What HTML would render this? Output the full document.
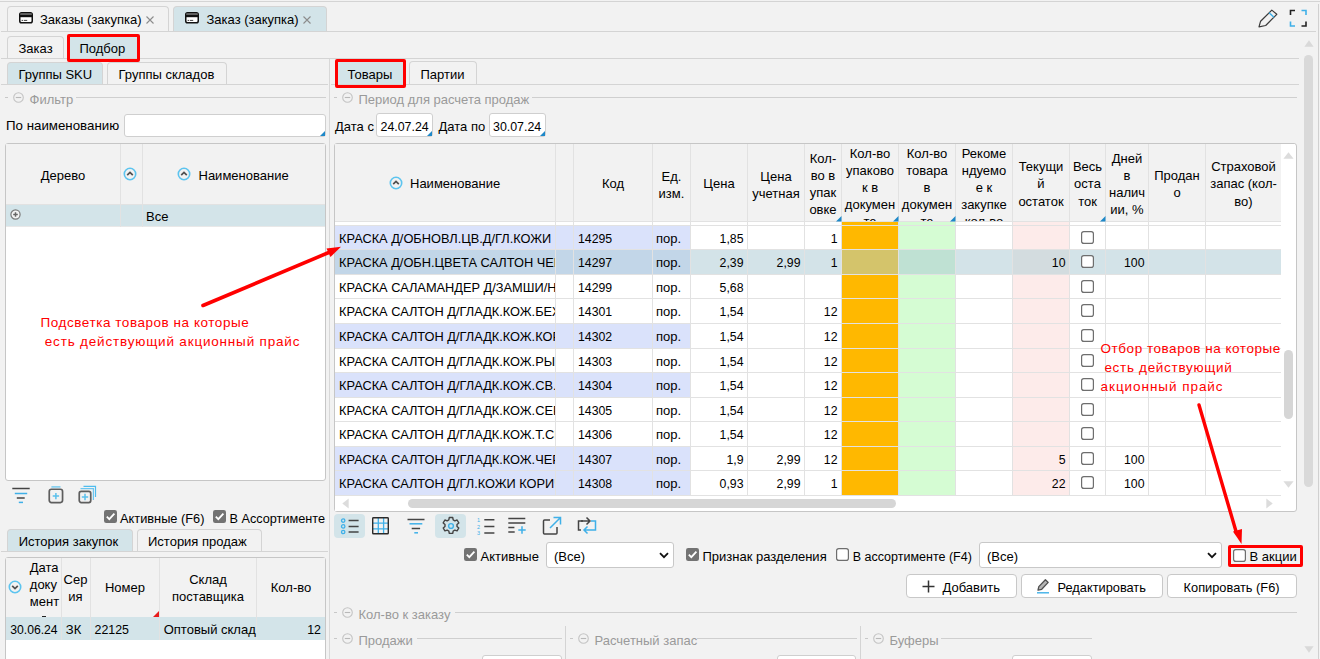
<!DOCTYPE html><html><head><meta charset="utf-8"><style>
html,body{margin:0;padding:0} body{width:1320px;height:659px;overflow:hidden;position:relative;background:#f2f2f2;font-family:"Liberation Sans", sans-serif;font-size:13px;color:#000}
.t{position:absolute;white-space:nowrap;line-height:16px}
svg{position:absolute;overflow:visible}
</style></head><body>
<div style="position:absolute;left:0px;top:1px;width:1320px;height:1px;background:#d4d4d4"></div>
<div style="position:absolute;left:1px;top:31px;width:1315px;height:1px;background:#d4d4d4"></div>
<div style="position:absolute;left:1318px;top:4px;width:1px;height:655px;background:#d0d0d0"></div>
<div style="position:absolute;left:7px;top:6px;width:162px;height:25px;background:#f2f2f2;border:1px solid #d4d4d4;border-bottom:none;border-radius:4px 4px 0 0;box-sizing:border-box"></div>
<div style="position:absolute;left:173px;top:6px;width:154px;height:25px;background:#d3e4e9;border:1px solid #d4d4d4;border-bottom:none;border-radius:4px 4px 0 0;box-sizing:border-box"></div>
<svg style="left:18.8px;top:12px" width="14" height="11.5" viewBox="0 0 14 11.5"><rect x="0.75" y="0.75" width="12.5" height="10" rx="1.8" fill="#fff" stroke="#111" stroke-width="1.5"/><rect x="1.2" y="1.2" width="11.6" height="1.6" fill="#555"/><rect x="1" y="2.8" width="12" height="2.4" fill="#111"/><rect x="2.6" y="7.9" width="1.6" height="1" fill="#444"/><rect x="5" y="7.9" width="3.2" height="1" fill="#444"/></svg>
<div class="t" style="left:40px;top:11.80px;font-size:13px;">Заказы (закупка)</div>
<svg style="left:184.8px;top:12.3px" width="14" height="11.5" viewBox="0 0 14 11.5"><rect x="0.75" y="0.75" width="12.5" height="10" rx="1.8" fill="#fff" stroke="#111" stroke-width="1.5"/><rect x="1.2" y="1.2" width="11.6" height="1.6" fill="#555"/><rect x="1" y="2.8" width="12" height="2.4" fill="#111"/><rect x="2.6" y="7.9" width="1.6" height="1" fill="#444"/><rect x="5" y="7.9" width="3.2" height="1" fill="#444"/></svg>
<div class="t" style="left:206.5px;top:11.80px;font-size:13px;">Заказ (закупка)</div>
<svg style="left:145.5px;top:15.5px" width="8" height="8" viewBox="0 0 8 8"><path d="M0.5 0.5L7.5 7.5M7.5 0.5L0.5 7.5" stroke="#8c8c8c" stroke-width="1.1"/></svg>
<svg style="left:302.5px;top:15.5px" width="8" height="8" viewBox="0 0 8 8"><path d="M0.5 0.5L7.5 7.5M7.5 0.5L0.5 7.5" stroke="#8c8c8c" stroke-width="1.1"/></svg>
<svg style="left:1258px;top:9px" width="20" height="19" viewBox="0 0 20 19"><path d="M13.8 1.1L18.8 5.3L7.7 16.5L1 17.8L2.6 12.2Z" fill="none" stroke="#3a3a3a" stroke-width="1.2" stroke-linejoin="round"/><path d="M11.1 3.7L15.9 8.3" stroke="#3fb0e8" stroke-width="1.4"/></svg>
<svg style="left:1289px;top:9px" width="19" height="19" viewBox="0 0 19 19"><path d="M1.5 6V1.5H6" fill="none" stroke="#222" stroke-width="1.6"/><path d="M12.5 1.5H17V6" fill="none" stroke="#3fb0e8" stroke-width="1.6"/><path d="M1.5 12.5V17H6" fill="none" stroke="#3fb0e8" stroke-width="1.6"/><path d="M12.5 17H17V12.5" fill="none" stroke="#222" stroke-width="1.6"/></svg>
<div style="position:absolute;left:1px;top:58px;width:1298px;height:1px;background:#d4d4d4"></div>
<div style="position:absolute;left:7px;top:36px;width:57px;height:22px;background:#f2f2f2;border:1px solid #d4d4d4;border-bottom:none;border-radius:4px 4px 0 0;box-sizing:border-box"></div>
<div style="position:absolute;left:68px;top:35px;width:71px;height:23px;background:#d3e4e9;border:1px solid #d4d4d4;border-bottom:none;border-radius:4px 4px 0 0;box-sizing:border-box"></div>
<div class="t" style="left:18.5px;top:40.50px;font-size:13px;">Заказ</div>
<div class="t" style="left:79.5px;top:40.50px;font-size:13px;">Подбор</div>
<svg style="left:1304px;top:40px" width="10" height="7" viewBox="0 0 10 7"><path d="M5 0.3L9.6 6.7H0.4Z" fill="#d9d9d9"/></svg>
<div style="position:absolute;left:1304px;top:55px;width:9px;height:432px;background:#d9d9d9;border-radius:5px"></div>
<svg style="left:1304px;top:646px" width="10" height="7" viewBox="0 0 10 7"><path d="M5 6.7L9.6 0.3H0.4Z" fill="#d9d9d9"/></svg>
<div style="position:absolute;left:329px;top:59px;width:1px;height:600px;background:#d8d8d8"></div>
<div style="position:absolute;left:1px;top:84px;width:327px;height:1px;background:#d4d4d4"></div>
<div style="position:absolute;left:7px;top:62px;width:96px;height:22px;background:#d3e4e9;border:1px solid #d4d4d4;border-bottom:none;border-radius:4px 4px 0 0;box-sizing:border-box"></div>
<div style="position:absolute;left:107px;top:62px;width:120px;height:22px;background:#f2f2f2;border:1px solid #d4d4d4;border-bottom:none;border-radius:4px 4px 0 0;box-sizing:border-box"></div>
<div class="t" style="left:18.5px;top:66.50px;font-size:13px;">Группы SKU</div>
<div class="t" style="left:118.5px;top:66.50px;font-size:13px;">Группы складов</div>
<div style="position:absolute;left:5px;top:97px;width:3px;height:1px;background:#c8c8c8"></div>
<svg style="left:13px;top:91.5px" width="11" height="11" viewBox="0 0 11 11"><circle cx="5.5" cy="5.5" r="4.8" fill="none" stroke="#c4c4c4" stroke-width="1.1"/><path d="M2.8 5.5H8.2" stroke="#b8b8b8" stroke-width="1.1"/></svg>
<div class="t" style="left:29.5px;top:91.50px;font-size:13px;color:#9a9a9a">Фильтр</div>
<div style="position:absolute;left:76px;top:97px;width:250px;height:1px;background:#cfcfcf"></div>
<div class="t" style="left:6px;top:118.39px;font-size:13.3px;">По наименованию</div>
<div style="position:absolute;left:124px;top:114px;width:202px;height:23px;background:#fff;border:1px solid #cfcfcf;border-radius:3px;box-sizing:border-box"></div>
<svg style="left:320px;top:131px" width="5" height="5" viewBox="0 0 5 5"><path d="M5 0V5H0Z" fill="#1e88c8"/></svg>
<div style="position:absolute;left:5px;top:143px;width:321px;height:338px;background:#fff;border:1px solid #c6c6c6;border-radius:3px;box-sizing:border-box"></div>
<div style="position:absolute;left:6px;top:144px;width:319px;height:60px;background:#f2f2f2"></div>
<div style="position:absolute;left:6px;top:204px;width:319px;height:1px;background:#e2e2e2"></div>
<div style="position:absolute;left:6px;top:205px;width:319px;height:21px;background:#d3e4e9"></div>
<div style="position:absolute;left:6px;top:226px;width:319px;height:1px;background:#e8e8e8"></div>
<div style="position:absolute;left:120px;top:144px;width:1px;height:83px;background:#e2e2e2"></div>
<div style="position:absolute;left:142px;top:144px;width:1px;height:83px;background:#e2e2e2"></div>
<div class="t" style="left:40.8px;top:167.50px;font-size:13px;">Дерево</div>
<svg style="left:123px;top:166.8px" width="14" height="14" viewBox="0 0 14 14"><circle cx="7" cy="7" r="5.7" fill="#f2f2f2" stroke="#5cc4ef" stroke-width="1.6"/><path d="M4.2 8.2L7 5.4L9.8 8.2" fill="none" stroke="#505050" stroke-width="1.7"/></svg>
<svg style="left:177.4px;top:166.8px" width="14" height="14" viewBox="0 0 14 14"><circle cx="7" cy="7" r="5.7" fill="#f2f2f2" stroke="#5cc4ef" stroke-width="1.6"/><path d="M4.2 8.2L7 5.4L9.8 8.2" fill="none" stroke="#505050" stroke-width="1.7"/></svg>
<div class="t" style="left:198.5px;top:167.50px;font-size:13px;">Наименование</div>
<svg style="left:10px;top:209px" width="11" height="11" viewBox="0 0 11 11"><circle cx="5.5" cy="5.5" r="4.6" fill="#f4f4f4" stroke="#7a7a7a" stroke-width="1.2"/><path d="M3.2 5.5H7.8M5.5 3.2V7.8" stroke="#666" stroke-width="1.5"/></svg>
<div class="t" style="left:146px;top:208.50px;font-size:13px;">Все</div>
<svg style="left:12px;top:487px" width="18" height="17" viewBox="0 0 18 17"><path d="M0.3 1.5H17.7" stroke="#444" stroke-width="1.5"/><path d="M2.8 6.5H15.2" stroke="#3fb0e8" stroke-width="1.5"/><path d="M4.8 11H12.7" stroke="#444" stroke-width="1.5"/><path d="M6.8 15.4H11" stroke="#3fb0e8" stroke-width="1.5"/></svg>
<svg style="left:47px;top:486px" width="18" height="19" viewBox="0 0 18 19"><path d="M4.4 0.9H13.5" stroke="#7fcdef" stroke-width="1.6"/><rect x="2.25" y="3.25" width="13.3" height="13.3" rx="2.2" fill="none" stroke="#5e5e5e" stroke-width="1.7"/><path d="M8.9 6.9V13.3M5.7 10.1H12.1" stroke="#5bc0eb" stroke-width="1.5"/></svg>
<svg style="left:77px;top:485px" width="20" height="20" viewBox="0 0 20 20"><path d="M6.5 1.3H18.5V12" fill="none" stroke="#4fbdee" stroke-width="1.2"/><path d="M3.5 3.6H16.4V15" fill="none" stroke="#6cc6ef" stroke-width="1.2"/><rect x="2.25" y="6.45" width="11.5" height="11.1" rx="2" fill="#f2f2f2" stroke="#5e5e5e" stroke-width="1.7"/><path d="M8 8.8V15.2M4.8 12H11.2" stroke="#5bc0eb" stroke-width="1.5"/></svg>
<svg style="left:104px;top:510px" width="13" height="13" viewBox="0 0 13 13"><rect x="0" y="0" width="13" height="13" rx="2.2" fill="#737373"/><path d="M2.8 6.7L5.3 9.2L10.4 3.6" fill="none" stroke="#fff" stroke-width="1.8"/></svg>
<div class="t" style="left:120px;top:510.56px;font-size:12.8px;">Активные (F6)</div>
<svg style="left:213px;top:510px" width="13" height="13" viewBox="0 0 13 13"><rect x="0" y="0" width="13" height="13" rx="2.2" fill="#737373"/><path d="M2.8 6.7L5.3 9.2L10.4 3.6" fill="none" stroke="#fff" stroke-width="1.8"/></svg>
<div class="t" style="left:229.5px;top:510.60px;font-size:12.7px;">В Ассортименте</div>
<div style="position:absolute;left:1px;top:551px;width:327px;height:1px;background:#d4d4d4"></div>
<div style="position:absolute;left:7px;top:529px;width:126px;height:22px;background:#d3e4e9;border:1px solid #d4d4d4;border-bottom:none;border-radius:4px 4px 0 0;box-sizing:border-box"></div>
<div style="position:absolute;left:137px;top:529px;width:125px;height:22px;background:#f2f2f2;border:1px solid #d4d4d4;border-bottom:none;border-radius:4px 4px 0 0;box-sizing:border-box"></div>
<div class="t" style="left:18.7px;top:533.50px;font-size:13px;">История закупок</div>
<div class="t" style="left:148px;top:533.50px;font-size:13px;">История продаж</div>
<div style="position:absolute;left:5px;top:557px;width:321px;height:110px;background:#fff;border:1px solid #c6c6c6;border-radius:3px;box-sizing:border-box"></div>
<div style="position:absolute;left:6px;top:558px;width:319px;height:59px;background:#f2f2f2"></div>
<div style="position:absolute;left:6px;top:617px;width:319px;height:23px;background:#d3e4e9"></div>
<div style="position:absolute;left:61px;top:558px;width:1px;height:82px;background:#e2e2e2"></div>
<div style="position:absolute;left:90px;top:558px;width:1px;height:82px;background:#e2e2e2"></div>
<div style="position:absolute;left:159px;top:558px;width:1px;height:82px;background:#e2e2e2"></div>
<div style="position:absolute;left:256px;top:558px;width:1px;height:82px;background:#e2e2e2"></div>
<svg style="left:8.2px;top:580.2px" width="14" height="14" viewBox="0 0 14 14"><circle cx="7" cy="7" r="5.7" fill="#f2f2f2" stroke="#5cc4ef" stroke-width="1.6"/><path d="M4.2 5.8L7 8.6L9.8 5.8" fill="none" stroke="#505050" stroke-width="1.7"/></svg>
<div style="position:absolute;left:0;top:0;width:400px;height:617px;overflow:hidden">
<div style="position:absolute;left:42.3px;top:615.6px;width:3.6px;height:1.3px;background:#222"></div>
<div class="t" style="left:29.8px;top:559.80px;font-size:13px;">Дата</div>
<div class="t" style="left:29.8px;top:577.10px;font-size:13px;">доку</div>
<div class="t" style="left:29.8px;top:594.40px;font-size:13px;">мент</div>
</div>
<div class="t" style="left:-74.5px;top:572.00px;width:300px;text-align:center;font-size:13px;">Сер</div>
<div class="t" style="left:-74.5px;top:589.00px;width:300px;text-align:center;font-size:13px;">ия</div>
<div class="t" style="left:-25.0px;top:580.30px;width:300px;text-align:center;font-size:13px;">Номер</div>
<svg style="left:153px;top:611px" width="6" height="6" viewBox="0 0 6 6"><path d="M6 0V6H0Z" fill="#e81c1c"/></svg>
<div class="t" style="left:58.0px;top:571.50px;width:300px;text-align:center;font-size:13px;">Склад</div>
<div class="t" style="left:58.0px;top:588.50px;width:300px;text-align:center;font-size:13px;">поставщика</div>
<div class="t" style="left:141.0px;top:580.30px;width:300px;text-align:center;font-size:13px;">Кол-во</div>
<div class="t" style="left:10.2px;top:621.77px;font-size:12.2px;">30.06.24</div>
<div class="t" style="left:65.8px;top:621.50px;font-size:13px;">ЗК</div>
<div class="t" style="left:94.5px;top:621.70px;font-size:12.4px;">22125</div>
<div class="t" style="left:163.7px;top:621.50px;font-size:13px;">Оптовый склад</div>
<div class="t" style="left:21px;top:621.70px;width:300px;text-align:right;font-size:12.4px;">12</div>
<div style="position:absolute;left:331px;top:84px;width:968px;height:1px;background:#d4d4d4"></div>
<div style="position:absolute;left:335px;top:61px;width:70px;height:23px;background:#d3e4e9;border:1px solid #d4d4d4;border-bottom:none;border-radius:4px 4px 0 0;box-sizing:border-box"></div>
<div style="position:absolute;left:409px;top:61px;width:68px;height:23px;background:#f2f2f2;border:1px solid #d4d4d4;border-bottom:none;border-radius:4px 4px 0 0;box-sizing:border-box"></div>
<div class="t" style="left:347.5px;top:67.00px;font-size:13px;">Товары</div>
<div class="t" style="left:420.5px;top:67.00px;font-size:13px;">Партии</div>
<div style="position:absolute;left:334px;top:97px;width:3px;height:1px;background:#c8c8c8"></div>
<svg style="left:342px;top:91.5px" width="11" height="11" viewBox="0 0 11 11"><circle cx="5.5" cy="5.5" r="4.8" fill="none" stroke="#c4c4c4" stroke-width="1.1"/><path d="M2.8 5.5H8.2" stroke="#b8b8b8" stroke-width="1.1"/></svg>
<div class="t" style="left:358.5px;top:91.50px;font-size:13px;color:#9a9a9a">Период для расчета продаж</div>
<div style="position:absolute;left:532px;top:97px;width:765px;height:1px;background:#cfcfcf"></div>
<div class="t" style="left:335px;top:118.50px;font-size:13px;">Дата с</div>
<div style="position:absolute;left:376px;top:113px;width:57px;height:24px;background:#fff;border:1px solid #cfcfcf;border-radius:3px;box-sizing:border-box"></div>
<svg style="left:427px;top:131px" width="5" height="5" viewBox="0 0 5 5"><path d="M5 0V5H0Z" fill="#1e88c8"/></svg>
<div class="t" style="left:380.5px;top:118.70px;font-size:12.4px;">24.07.24</div>
<div class="t" style="left:438.5px;top:118.50px;font-size:13px;">Дата по</div>
<div style="position:absolute;left:489px;top:113px;width:57px;height:24px;background:#fff;border:1px solid #cfcfcf;border-radius:3px;box-sizing:border-box"></div>
<svg style="left:540px;top:131px" width="5" height="5" viewBox="0 0 5 5"><path d="M5 0V5H0Z" fill="#1e88c8"/></svg>
<div class="t" style="left:493px;top:118.70px;font-size:12.4px;">30.07.24</div>
<div style="position:absolute;left:334px;top:143px;width:963px;height:369px;background:#fff;border:1px solid #c6c6c6;border-radius:3px;box-sizing:border-box"></div>
<div style="position:absolute;left:335px;top:144px;width:946px;height:352px;background:#e2e2e2"></div>
<div style="position:absolute;left:335px;top:222px;width:220px;height:3px;background:#fff"></div>
<div style="position:absolute;left:556px;top:222px;width:17px;height:3px;background:#fff"></div>
<div style="position:absolute;left:574px;top:222px;width:78px;height:3px;background:#fff"></div>
<div style="position:absolute;left:653px;top:222px;width:37px;height:3px;background:#fff"></div>
<div style="position:absolute;left:691px;top:222px;width:56px;height:3px;background:#fff"></div>
<div style="position:absolute;left:748px;top:222px;width:56px;height:3px;background:#fff"></div>
<div style="position:absolute;left:805px;top:222px;width:36px;height:3px;background:#fff"></div>
<div style="position:absolute;left:842px;top:222px;width:56px;height:3px;background:#ffb800"></div>
<div style="position:absolute;left:899px;top:222px;width:56px;height:3px;background:#d5fcd3"></div>
<div style="position:absolute;left:956px;top:222px;width:56px;height:3px;background:#fff"></div>
<div style="position:absolute;left:1013px;top:222px;width:56px;height:3px;background:#fdebea"></div>
<div style="position:absolute;left:1070px;top:222px;width:35px;height:3px;background:#fff"></div>
<div style="position:absolute;left:1106px;top:222px;width:42px;height:3px;background:#fff"></div>
<div style="position:absolute;left:1149px;top:222px;width:56px;height:3px;background:#fff"></div>
<div style="position:absolute;left:1206px;top:222px;width:75px;height:3px;background:#fff"></div>
<div style="position:absolute;left:335px;top:226px;width:220px;height:23px;background:#dae2fb"></div>
<div style="position:absolute;left:556px;top:226px;width:17px;height:23px;background:#dae2fb"></div>
<div style="position:absolute;left:574px;top:226px;width:78px;height:23px;background:#dae2fb"></div>
<div style="position:absolute;left:653px;top:226px;width:37px;height:23px;background:#dae2fb"></div>
<div style="position:absolute;left:691px;top:226px;width:56px;height:23px;background:#fff"></div>
<div style="position:absolute;left:748px;top:226px;width:56px;height:23px;background:#fff"></div>
<div style="position:absolute;left:805px;top:226px;width:36px;height:23px;background:#fff"></div>
<div style="position:absolute;left:842px;top:226px;width:56px;height:23px;background:#ffb800"></div>
<div style="position:absolute;left:899px;top:226px;width:56px;height:23px;background:#d5fcd3"></div>
<div style="position:absolute;left:956px;top:226px;width:56px;height:23px;background:#fff"></div>
<div style="position:absolute;left:1013px;top:226px;width:56px;height:23px;background:#fdebea"></div>
<div style="position:absolute;left:1070px;top:226px;width:35px;height:23px;background:#fff"></div>
<div style="position:absolute;left:1106px;top:226px;width:42px;height:23px;background:#fff"></div>
<div style="position:absolute;left:1149px;top:226px;width:56px;height:23px;background:#fff"></div>
<div style="position:absolute;left:1206px;top:226px;width:75px;height:23px;background:#fff"></div>
<div style="position:absolute;left:335px;top:250px;width:220px;height:24px;background:#c2d6e8"></div>
<div style="position:absolute;left:556px;top:250px;width:17px;height:24px;background:#c2d6e8"></div>
<div style="position:absolute;left:574px;top:250px;width:78px;height:24px;background:#c2d6e8"></div>
<div style="position:absolute;left:653px;top:250px;width:37px;height:24px;background:#c2d6e8"></div>
<div style="position:absolute;left:691px;top:250px;width:56px;height:24px;background:#d3e3e8"></div>
<div style="position:absolute;left:748px;top:250px;width:56px;height:24px;background:#d3e3e8"></div>
<div style="position:absolute;left:805px;top:250px;width:36px;height:24px;background:#d3e3e8"></div>
<div style="position:absolute;left:842px;top:250px;width:56px;height:24px;background:#d4c46b"></div>
<div style="position:absolute;left:899px;top:250px;width:56px;height:24px;background:#bfe1d3"></div>
<div style="position:absolute;left:956px;top:250px;width:56px;height:24px;background:#d3e3e8"></div>
<div style="position:absolute;left:1013px;top:250px;width:56px;height:24px;background:#d3dcdf"></div>
<div style="position:absolute;left:1070px;top:250px;width:35px;height:24px;background:#d3e3e8"></div>
<div style="position:absolute;left:1106px;top:250px;width:42px;height:24px;background:#d3e3e8"></div>
<div style="position:absolute;left:1149px;top:250px;width:56px;height:24px;background:#d3e3e8"></div>
<div style="position:absolute;left:1206px;top:250px;width:75px;height:24px;background:#d3e3e8"></div>
<div style="position:absolute;left:335px;top:275px;width:220px;height:23px;background:#fff"></div>
<div style="position:absolute;left:556px;top:275px;width:17px;height:23px;background:#fff"></div>
<div style="position:absolute;left:574px;top:275px;width:78px;height:23px;background:#fff"></div>
<div style="position:absolute;left:653px;top:275px;width:37px;height:23px;background:#fff"></div>
<div style="position:absolute;left:691px;top:275px;width:56px;height:23px;background:#fff"></div>
<div style="position:absolute;left:748px;top:275px;width:56px;height:23px;background:#fff"></div>
<div style="position:absolute;left:805px;top:275px;width:36px;height:23px;background:#fff"></div>
<div style="position:absolute;left:842px;top:275px;width:56px;height:23px;background:#ffb800"></div>
<div style="position:absolute;left:899px;top:275px;width:56px;height:23px;background:#d5fcd3"></div>
<div style="position:absolute;left:956px;top:275px;width:56px;height:23px;background:#fff"></div>
<div style="position:absolute;left:1013px;top:275px;width:56px;height:23px;background:#fdebea"></div>
<div style="position:absolute;left:1070px;top:275px;width:35px;height:23px;background:#fff"></div>
<div style="position:absolute;left:1106px;top:275px;width:42px;height:23px;background:#fff"></div>
<div style="position:absolute;left:1149px;top:275px;width:56px;height:23px;background:#fff"></div>
<div style="position:absolute;left:1206px;top:275px;width:75px;height:23px;background:#fff"></div>
<div style="position:absolute;left:335px;top:299px;width:220px;height:24px;background:#fff"></div>
<div style="position:absolute;left:556px;top:299px;width:17px;height:24px;background:#fff"></div>
<div style="position:absolute;left:574px;top:299px;width:78px;height:24px;background:#fff"></div>
<div style="position:absolute;left:653px;top:299px;width:37px;height:24px;background:#fff"></div>
<div style="position:absolute;left:691px;top:299px;width:56px;height:24px;background:#fff"></div>
<div style="position:absolute;left:748px;top:299px;width:56px;height:24px;background:#fff"></div>
<div style="position:absolute;left:805px;top:299px;width:36px;height:24px;background:#fff"></div>
<div style="position:absolute;left:842px;top:299px;width:56px;height:24px;background:#ffb800"></div>
<div style="position:absolute;left:899px;top:299px;width:56px;height:24px;background:#d5fcd3"></div>
<div style="position:absolute;left:956px;top:299px;width:56px;height:24px;background:#fff"></div>
<div style="position:absolute;left:1013px;top:299px;width:56px;height:24px;background:#fdebea"></div>
<div style="position:absolute;left:1070px;top:299px;width:35px;height:24px;background:#fff"></div>
<div style="position:absolute;left:1106px;top:299px;width:42px;height:24px;background:#fff"></div>
<div style="position:absolute;left:1149px;top:299px;width:56px;height:24px;background:#fff"></div>
<div style="position:absolute;left:1206px;top:299px;width:75px;height:24px;background:#fff"></div>
<div style="position:absolute;left:335px;top:324px;width:220px;height:24px;background:#dae2fb"></div>
<div style="position:absolute;left:556px;top:324px;width:17px;height:24px;background:#dae2fb"></div>
<div style="position:absolute;left:574px;top:324px;width:78px;height:24px;background:#dae2fb"></div>
<div style="position:absolute;left:653px;top:324px;width:37px;height:24px;background:#dae2fb"></div>
<div style="position:absolute;left:691px;top:324px;width:56px;height:24px;background:#fff"></div>
<div style="position:absolute;left:748px;top:324px;width:56px;height:24px;background:#fff"></div>
<div style="position:absolute;left:805px;top:324px;width:36px;height:24px;background:#fff"></div>
<div style="position:absolute;left:842px;top:324px;width:56px;height:24px;background:#ffb800"></div>
<div style="position:absolute;left:899px;top:324px;width:56px;height:24px;background:#d5fcd3"></div>
<div style="position:absolute;left:956px;top:324px;width:56px;height:24px;background:#fff"></div>
<div style="position:absolute;left:1013px;top:324px;width:56px;height:24px;background:#fdebea"></div>
<div style="position:absolute;left:1070px;top:324px;width:35px;height:24px;background:#fff"></div>
<div style="position:absolute;left:1106px;top:324px;width:42px;height:24px;background:#fff"></div>
<div style="position:absolute;left:1149px;top:324px;width:56px;height:24px;background:#fff"></div>
<div style="position:absolute;left:1206px;top:324px;width:75px;height:24px;background:#fff"></div>
<div style="position:absolute;left:335px;top:349px;width:220px;height:23px;background:#fff"></div>
<div style="position:absolute;left:556px;top:349px;width:17px;height:23px;background:#fff"></div>
<div style="position:absolute;left:574px;top:349px;width:78px;height:23px;background:#fff"></div>
<div style="position:absolute;left:653px;top:349px;width:37px;height:23px;background:#fff"></div>
<div style="position:absolute;left:691px;top:349px;width:56px;height:23px;background:#fff"></div>
<div style="position:absolute;left:748px;top:349px;width:56px;height:23px;background:#fff"></div>
<div style="position:absolute;left:805px;top:349px;width:36px;height:23px;background:#fff"></div>
<div style="position:absolute;left:842px;top:349px;width:56px;height:23px;background:#ffb800"></div>
<div style="position:absolute;left:899px;top:349px;width:56px;height:23px;background:#d5fcd3"></div>
<div style="position:absolute;left:956px;top:349px;width:56px;height:23px;background:#fff"></div>
<div style="position:absolute;left:1013px;top:349px;width:56px;height:23px;background:#fdebea"></div>
<div style="position:absolute;left:1070px;top:349px;width:35px;height:23px;background:#fff"></div>
<div style="position:absolute;left:1106px;top:349px;width:42px;height:23px;background:#fff"></div>
<div style="position:absolute;left:1149px;top:349px;width:56px;height:23px;background:#fff"></div>
<div style="position:absolute;left:1206px;top:349px;width:75px;height:23px;background:#fff"></div>
<div style="position:absolute;left:335px;top:373px;width:220px;height:24px;background:#dae2fb"></div>
<div style="position:absolute;left:556px;top:373px;width:17px;height:24px;background:#dae2fb"></div>
<div style="position:absolute;left:574px;top:373px;width:78px;height:24px;background:#dae2fb"></div>
<div style="position:absolute;left:653px;top:373px;width:37px;height:24px;background:#dae2fb"></div>
<div style="position:absolute;left:691px;top:373px;width:56px;height:24px;background:#fff"></div>
<div style="position:absolute;left:748px;top:373px;width:56px;height:24px;background:#fff"></div>
<div style="position:absolute;left:805px;top:373px;width:36px;height:24px;background:#fff"></div>
<div style="position:absolute;left:842px;top:373px;width:56px;height:24px;background:#ffb800"></div>
<div style="position:absolute;left:899px;top:373px;width:56px;height:24px;background:#d5fcd3"></div>
<div style="position:absolute;left:956px;top:373px;width:56px;height:24px;background:#fff"></div>
<div style="position:absolute;left:1013px;top:373px;width:56px;height:24px;background:#fdebea"></div>
<div style="position:absolute;left:1070px;top:373px;width:35px;height:24px;background:#fff"></div>
<div style="position:absolute;left:1106px;top:373px;width:42px;height:24px;background:#fff"></div>
<div style="position:absolute;left:1149px;top:373px;width:56px;height:24px;background:#fff"></div>
<div style="position:absolute;left:1206px;top:373px;width:75px;height:24px;background:#fff"></div>
<div style="position:absolute;left:335px;top:398px;width:220px;height:23px;background:#fff"></div>
<div style="position:absolute;left:556px;top:398px;width:17px;height:23px;background:#fff"></div>
<div style="position:absolute;left:574px;top:398px;width:78px;height:23px;background:#fff"></div>
<div style="position:absolute;left:653px;top:398px;width:37px;height:23px;background:#fff"></div>
<div style="position:absolute;left:691px;top:398px;width:56px;height:23px;background:#fff"></div>
<div style="position:absolute;left:748px;top:398px;width:56px;height:23px;background:#fff"></div>
<div style="position:absolute;left:805px;top:398px;width:36px;height:23px;background:#fff"></div>
<div style="position:absolute;left:842px;top:398px;width:56px;height:23px;background:#ffb800"></div>
<div style="position:absolute;left:899px;top:398px;width:56px;height:23px;background:#d5fcd3"></div>
<div style="position:absolute;left:956px;top:398px;width:56px;height:23px;background:#fff"></div>
<div style="position:absolute;left:1013px;top:398px;width:56px;height:23px;background:#fdebea"></div>
<div style="position:absolute;left:1070px;top:398px;width:35px;height:23px;background:#fff"></div>
<div style="position:absolute;left:1106px;top:398px;width:42px;height:23px;background:#fff"></div>
<div style="position:absolute;left:1149px;top:398px;width:56px;height:23px;background:#fff"></div>
<div style="position:absolute;left:1206px;top:398px;width:75px;height:23px;background:#fff"></div>
<div style="position:absolute;left:335px;top:422px;width:220px;height:24px;background:#fff"></div>
<div style="position:absolute;left:556px;top:422px;width:17px;height:24px;background:#fff"></div>
<div style="position:absolute;left:574px;top:422px;width:78px;height:24px;background:#fff"></div>
<div style="position:absolute;left:653px;top:422px;width:37px;height:24px;background:#fff"></div>
<div style="position:absolute;left:691px;top:422px;width:56px;height:24px;background:#fff"></div>
<div style="position:absolute;left:748px;top:422px;width:56px;height:24px;background:#fff"></div>
<div style="position:absolute;left:805px;top:422px;width:36px;height:24px;background:#fff"></div>
<div style="position:absolute;left:842px;top:422px;width:56px;height:24px;background:#ffb800"></div>
<div style="position:absolute;left:899px;top:422px;width:56px;height:24px;background:#d5fcd3"></div>
<div style="position:absolute;left:956px;top:422px;width:56px;height:24px;background:#fff"></div>
<div style="position:absolute;left:1013px;top:422px;width:56px;height:24px;background:#fdebea"></div>
<div style="position:absolute;left:1070px;top:422px;width:35px;height:24px;background:#fff"></div>
<div style="position:absolute;left:1106px;top:422px;width:42px;height:24px;background:#fff"></div>
<div style="position:absolute;left:1149px;top:422px;width:56px;height:24px;background:#fff"></div>
<div style="position:absolute;left:1206px;top:422px;width:75px;height:24px;background:#fff"></div>
<div style="position:absolute;left:335px;top:447px;width:220px;height:23px;background:#dae2fb"></div>
<div style="position:absolute;left:556px;top:447px;width:17px;height:23px;background:#dae2fb"></div>
<div style="position:absolute;left:574px;top:447px;width:78px;height:23px;background:#dae2fb"></div>
<div style="position:absolute;left:653px;top:447px;width:37px;height:23px;background:#dae2fb"></div>
<div style="position:absolute;left:691px;top:447px;width:56px;height:23px;background:#fff"></div>
<div style="position:absolute;left:748px;top:447px;width:56px;height:23px;background:#fff"></div>
<div style="position:absolute;left:805px;top:447px;width:36px;height:23px;background:#fff"></div>
<div style="position:absolute;left:842px;top:447px;width:56px;height:23px;background:#ffb800"></div>
<div style="position:absolute;left:899px;top:447px;width:56px;height:23px;background:#d5fcd3"></div>
<div style="position:absolute;left:956px;top:447px;width:56px;height:23px;background:#fff"></div>
<div style="position:absolute;left:1013px;top:447px;width:56px;height:23px;background:#fdebea"></div>
<div style="position:absolute;left:1070px;top:447px;width:35px;height:23px;background:#fff"></div>
<div style="position:absolute;left:1106px;top:447px;width:42px;height:23px;background:#fff"></div>
<div style="position:absolute;left:1149px;top:447px;width:56px;height:23px;background:#fff"></div>
<div style="position:absolute;left:1206px;top:447px;width:75px;height:23px;background:#fff"></div>
<div style="position:absolute;left:335px;top:471px;width:220px;height:24px;background:#dae2fb"></div>
<div style="position:absolute;left:556px;top:471px;width:17px;height:24px;background:#dae2fb"></div>
<div style="position:absolute;left:574px;top:471px;width:78px;height:24px;background:#dae2fb"></div>
<div style="position:absolute;left:653px;top:471px;width:37px;height:24px;background:#dae2fb"></div>
<div style="position:absolute;left:691px;top:471px;width:56px;height:24px;background:#fff"></div>
<div style="position:absolute;left:748px;top:471px;width:56px;height:24px;background:#fff"></div>
<div style="position:absolute;left:805px;top:471px;width:36px;height:24px;background:#fff"></div>
<div style="position:absolute;left:842px;top:471px;width:56px;height:24px;background:#ffb800"></div>
<div style="position:absolute;left:899px;top:471px;width:56px;height:24px;background:#d5fcd3"></div>
<div style="position:absolute;left:956px;top:471px;width:56px;height:24px;background:#fff"></div>
<div style="position:absolute;left:1013px;top:471px;width:56px;height:24px;background:#fdebea"></div>
<div style="position:absolute;left:1070px;top:471px;width:35px;height:24px;background:#fff"></div>
<div style="position:absolute;left:1106px;top:471px;width:42px;height:24px;background:#fff"></div>
<div style="position:absolute;left:1149px;top:471px;width:56px;height:24px;background:#fff"></div>
<div style="position:absolute;left:1206px;top:471px;width:75px;height:24px;background:#fff"></div>
<div style="position:absolute;left:335px;top:144px;width:946px;height:77px;background:#f2f2f2"></div>
<div style="position:absolute;left:555px;top:144px;width:1px;height:77px;background:#e2e2e2"></div>
<div style="position:absolute;left:573px;top:144px;width:1px;height:77px;background:#e2e2e2"></div>
<div style="position:absolute;left:652px;top:144px;width:1px;height:77px;background:#e2e2e2"></div>
<div style="position:absolute;left:690px;top:144px;width:1px;height:77px;background:#e2e2e2"></div>
<div style="position:absolute;left:747px;top:144px;width:1px;height:77px;background:#e2e2e2"></div>
<div style="position:absolute;left:804px;top:144px;width:1px;height:77px;background:#e2e2e2"></div>
<div style="position:absolute;left:841px;top:144px;width:1px;height:77px;background:#e2e2e2"></div>
<div style="position:absolute;left:898px;top:144px;width:1px;height:77px;background:#e2e2e2"></div>
<div style="position:absolute;left:955px;top:144px;width:1px;height:77px;background:#e2e2e2"></div>
<div style="position:absolute;left:1012px;top:144px;width:1px;height:77px;background:#e2e2e2"></div>
<div style="position:absolute;left:1069px;top:144px;width:1px;height:77px;background:#e2e2e2"></div>
<div style="position:absolute;left:1105px;top:144px;width:1px;height:77px;background:#e2e2e2"></div>
<div style="position:absolute;left:1148px;top:144px;width:1px;height:77px;background:#e2e2e2"></div>
<div style="position:absolute;left:1205px;top:144px;width:1px;height:77px;background:#e2e2e2"></div>
<div style="position:absolute;left:0;top:0;width:1320px;height:221px;overflow:hidden">
<svg style="left:389.4px;top:175.8px" width="14" height="14" viewBox="0 0 14 14"><circle cx="7" cy="7" r="5.7" fill="#f2f2f2" stroke="#5cc4ef" stroke-width="1.6"/><path d="M4.2 8.2L7 5.4L9.8 8.2" fill="none" stroke="#505050" stroke-width="1.7"/></svg>
<div class="t" style="left:410px;top:176.30px;font-size:13px;">Наименование</div>
<div class="t" style="left:573.5px;top:176.30px;width:79px;text-align:center;font-size:13px;">Код</div>
<div class="t" style="left:652.5px;top:168.80px;width:38px;text-align:center;font-size:13px;">Ед.</div>
<div class="t" style="left:652.5px;top:185.90px;width:38px;text-align:center;font-size:13px;">изм.</div>
<div class="t" style="left:690.5px;top:176.30px;width:57px;text-align:center;font-size:13px;">Цена</div>
<div class="t" style="left:747.5px;top:168.80px;width:57px;text-align:center;font-size:13px;">Цена</div>
<div class="t" style="left:747.5px;top:185.90px;width:57px;text-align:center;font-size:13px;">учетная</div>
<div class="t" style="left:804.5px;top:150.80px;width:37px;text-align:center;font-size:13px;">Кол-</div>
<div class="t" style="left:804.5px;top:167.90px;width:37px;text-align:center;font-size:13px;">во в</div>
<div class="t" style="left:804.5px;top:185.00px;width:37px;text-align:center;font-size:13px;">упак</div>
<div class="t" style="left:804.5px;top:202.10px;width:37px;text-align:center;font-size:13px;">овке</div>
<div class="t" style="left:841.5px;top:145.80px;width:57px;text-align:center;font-size:13px;">Кол-во</div>
<div class="t" style="left:841.5px;top:162.90px;width:57px;text-align:center;font-size:13px;">упаково</div>
<div class="t" style="left:841.5px;top:180.00px;width:57px;text-align:center;font-size:13px;">к в</div>
<div class="t" style="left:841.5px;top:197.10px;width:57px;text-align:center;font-size:13px;">докумен</div>
<div class="t" style="left:841.5px;top:214.20px;width:57px;text-align:center;font-size:13px;">те</div>
<div class="t" style="left:898.5px;top:145.80px;width:57px;text-align:center;font-size:13px;">Кол-во</div>
<div class="t" style="left:898.5px;top:162.90px;width:57px;text-align:center;font-size:13px;">товара</div>
<div class="t" style="left:898.5px;top:180.00px;width:57px;text-align:center;font-size:13px;">в</div>
<div class="t" style="left:898.5px;top:197.10px;width:57px;text-align:center;font-size:13px;">докумен</div>
<div class="t" style="left:898.5px;top:214.20px;width:57px;text-align:center;font-size:13px;">те</div>
<div class="t" style="left:955.5px;top:145.80px;width:57px;text-align:center;font-size:13px;">Рекоме</div>
<div class="t" style="left:955.5px;top:162.90px;width:57px;text-align:center;font-size:13px;">ндуемо</div>
<div class="t" style="left:955.5px;top:180.00px;width:57px;text-align:center;font-size:13px;">е к</div>
<div class="t" style="left:955.5px;top:197.10px;width:57px;text-align:center;font-size:13px;">закупке</div>
<div class="t" style="left:955.5px;top:214.20px;width:57px;text-align:center;font-size:13px;">кол-во</div>
<div class="t" style="left:1012.5px;top:159.30px;width:57px;text-align:center;font-size:13px;">Текущи</div>
<div class="t" style="left:1012.5px;top:176.40px;width:57px;text-align:center;font-size:13px;">й</div>
<div class="t" style="left:1012.5px;top:193.50px;width:57px;text-align:center;font-size:13px;">остаток</div>
<div class="t" style="left:1069.5px;top:159.30px;width:36px;text-align:center;font-size:13px;">Весь</div>
<div class="t" style="left:1069.5px;top:176.40px;width:36px;text-align:center;font-size:13px;">оста</div>
<div class="t" style="left:1069.5px;top:193.50px;width:36px;text-align:center;font-size:13px;">ток</div>
<div class="t" style="left:1105.5px;top:150.80px;width:43px;text-align:center;font-size:13px;">Дней</div>
<div class="t" style="left:1105.5px;top:167.90px;width:43px;text-align:center;font-size:13px;">в</div>
<div class="t" style="left:1105.5px;top:185.00px;width:43px;text-align:center;font-size:13px;">налич</div>
<div class="t" style="left:1105.5px;top:202.10px;width:43px;text-align:center;font-size:13px;">ии, %</div>
<div class="t" style="left:1148.5px;top:168.30px;width:57px;text-align:center;font-size:13px;">Продан</div>
<div class="t" style="left:1148.5px;top:185.40px;width:57px;text-align:center;font-size:13px;">о</div>
<div class="t" style="left:1205.5px;top:159.30px;width:76px;text-align:center;font-size:13px;">Страховой</div>
<div class="t" style="left:1205.5px;top:176.40px;width:76px;text-align:center;font-size:13px;">запас (кол-</div>
<div class="t" style="left:1205.5px;top:193.50px;width:76px;text-align:center;font-size:13px;">во)</div>
</div>
<svg style="left:835.5px;top:215.8px" width="5.5" height="5.5" viewBox="0 0 6 6"><path d="M6 0V6H0Z" fill="#1e88c8"/></svg>
<svg style="left:892.5px;top:215.8px" width="5.5" height="5.5" viewBox="0 0 6 6"><path d="M6 0V6H0Z" fill="#1e88c8"/></svg>
<svg style="left:949.5px;top:215.8px" width="5.5" height="5.5" viewBox="0 0 6 6"><path d="M6 0V6H0Z" fill="#1e88c8"/></svg>
<svg style="left:1099.5px;top:215.8px" width="5.5" height="5.5" viewBox="0 0 6 6"><path d="M6 0V6H0Z" fill="#1e88c8"/></svg>
<div style="position:absolute;left:0;top:0;width:555px;height:659px;overflow:hidden">
<div class="t" style="left:339px;top:230.50px;font-size:13px;font-size:12.8px">КРАСКА Д/ОБНОВЛ.ЦВ.Д/ГЛ.КОЖИ</div>
<div class="t" style="left:339px;top:255.00px;font-size:13px;font-size:12.8px">КРАСКА Д/ОБН.ЦВЕТА САЛТОН ЧЕРНАЯ</div>
<div class="t" style="left:339px;top:279.50px;font-size:13px;font-size:12.8px">КРАСКА САЛАМАНДЕР Д/ЗАМШИ/НУБУКА</div>
<div class="t" style="left:339px;top:304.00px;font-size:13px;font-size:12.8px">КРАСКА САЛТОН Д/ГЛАДК.КОЖ.БЕЖЕВАЯ</div>
<div class="t" style="left:339px;top:329.00px;font-size:13px;font-size:12.8px">КРАСКА САЛТОН Д/ГЛАДК.КОЖ.КОРИЧН</div>
<div class="t" style="left:339px;top:353.50px;font-size:13px;font-size:12.8px">КРАСКА САЛТОН Д/ГЛАДК.КОЖ.РЫЖАЯ</div>
<div class="t" style="left:339px;top:378.00px;font-size:13px;font-size:12.8px">КРАСКА САЛТОН Д/ГЛАДК.КОЖ.СВ.КОР</div>
<div class="t" style="left:339px;top:402.50px;font-size:13px;font-size:12.8px">КРАСКА САЛТОН Д/ГЛАДК.КОЖ.СЕРАЯ</div>
<div class="t" style="left:339px;top:427.00px;font-size:13px;font-size:12.8px">КРАСКА САЛТОН Д/ГЛАДК.КОЖ.Т.СИНЯЯ</div>
<div class="t" style="left:339px;top:451.50px;font-size:13px;font-size:12.8px">КРАСКА САЛТОН Д/ГЛАДК.КОЖ.ЧЕРНАЯ</div>
<div class="t" style="left:339px;top:476.00px;font-size:13px;font-size:12.8px">КРАСКА САЛТОН Д/ГЛ.КОЖИ КОРИЧНЕВАЯ</div>
</div>
<div class="t" style="left:578px;top:230.74px;font-size:12.3px;">14295</div>
<div class="t" style="left:656px;top:230.50px;font-size:13px;">пор.</div>
<div class="t" style="left:443.5px;top:230.74px;width:300px;text-align:right;font-size:12.3px;">1,85</div>
<div class="t" style="left:537.5px;top:230.74px;width:300px;text-align:right;font-size:12.3px;">1</div>
<svg style="left:1081px;top:231px" width="13" height="13" viewBox="0 0 13 13"><rect x="0.6" y="0.6" width="11.8" height="11.8" rx="2.2" fill="#fff" stroke="#6e6e6e" stroke-width="1.2"/></svg>
<div class="t" style="left:578px;top:255.24px;font-size:12.3px;">14297</div>
<div class="t" style="left:656px;top:255.00px;font-size:13px;">пор.</div>
<div class="t" style="left:443.5px;top:255.24px;width:300px;text-align:right;font-size:12.3px;">2,39</div>
<div class="t" style="left:500.5px;top:255.24px;width:300px;text-align:right;font-size:12.3px;">2,99</div>
<div class="t" style="left:537.5px;top:255.24px;width:300px;text-align:right;font-size:12.3px;">1</div>
<div class="t" style="left:765.5px;top:255.24px;width:300px;text-align:right;font-size:12.3px;">10</div>
<svg style="left:1081px;top:255px" width="13" height="13" viewBox="0 0 13 13"><rect x="0.6" y="0.6" width="11.8" height="11.8" rx="2.2" fill="#fff" stroke="#6e6e6e" stroke-width="1.2"/></svg>
<div class="t" style="left:844.5px;top:255.24px;width:300px;text-align:right;font-size:12.3px;">100</div>
<div class="t" style="left:578px;top:279.74px;font-size:12.3px;">14299</div>
<div class="t" style="left:656px;top:279.50px;font-size:13px;">пор.</div>
<div class="t" style="left:443.5px;top:279.74px;width:300px;text-align:right;font-size:12.3px;">5,68</div>
<svg style="left:1081px;top:280px" width="13" height="13" viewBox="0 0 13 13"><rect x="0.6" y="0.6" width="11.8" height="11.8" rx="2.2" fill="#fff" stroke="#6e6e6e" stroke-width="1.2"/></svg>
<div class="t" style="left:578px;top:304.24px;font-size:12.3px;">14301</div>
<div class="t" style="left:656px;top:304.00px;font-size:13px;">пор.</div>
<div class="t" style="left:443.5px;top:304.24px;width:300px;text-align:right;font-size:12.3px;">1,54</div>
<div class="t" style="left:537.5px;top:304.24px;width:300px;text-align:right;font-size:12.3px;">12</div>
<svg style="left:1081px;top:304px" width="13" height="13" viewBox="0 0 13 13"><rect x="0.6" y="0.6" width="11.8" height="11.8" rx="2.2" fill="#fff" stroke="#6e6e6e" stroke-width="1.2"/></svg>
<div class="t" style="left:578px;top:329.24px;font-size:12.3px;">14302</div>
<div class="t" style="left:656px;top:329.00px;font-size:13px;">пор.</div>
<div class="t" style="left:443.5px;top:329.24px;width:300px;text-align:right;font-size:12.3px;">1,54</div>
<div class="t" style="left:537.5px;top:329.24px;width:300px;text-align:right;font-size:12.3px;">12</div>
<svg style="left:1081px;top:329px" width="13" height="13" viewBox="0 0 13 13"><rect x="0.6" y="0.6" width="11.8" height="11.8" rx="2.2" fill="#fff" stroke="#6e6e6e" stroke-width="1.2"/></svg>
<div class="t" style="left:578px;top:353.74px;font-size:12.3px;">14303</div>
<div class="t" style="left:656px;top:353.50px;font-size:13px;">пор.</div>
<div class="t" style="left:443.5px;top:353.74px;width:300px;text-align:right;font-size:12.3px;">1,54</div>
<div class="t" style="left:537.5px;top:353.74px;width:300px;text-align:right;font-size:12.3px;">12</div>
<svg style="left:1081px;top:354px" width="13" height="13" viewBox="0 0 13 13"><rect x="0.6" y="0.6" width="11.8" height="11.8" rx="2.2" fill="#fff" stroke="#6e6e6e" stroke-width="1.2"/></svg>
<div class="t" style="left:578px;top:378.24px;font-size:12.3px;">14304</div>
<div class="t" style="left:656px;top:378.00px;font-size:13px;">пор.</div>
<div class="t" style="left:443.5px;top:378.24px;width:300px;text-align:right;font-size:12.3px;">1,54</div>
<div class="t" style="left:537.5px;top:378.24px;width:300px;text-align:right;font-size:12.3px;">12</div>
<svg style="left:1081px;top:378px" width="13" height="13" viewBox="0 0 13 13"><rect x="0.6" y="0.6" width="11.8" height="11.8" rx="2.2" fill="#fff" stroke="#6e6e6e" stroke-width="1.2"/></svg>
<div class="t" style="left:578px;top:402.74px;font-size:12.3px;">14305</div>
<div class="t" style="left:656px;top:402.50px;font-size:13px;">пор.</div>
<div class="t" style="left:443.5px;top:402.74px;width:300px;text-align:right;font-size:12.3px;">1,54</div>
<div class="t" style="left:537.5px;top:402.74px;width:300px;text-align:right;font-size:12.3px;">12</div>
<svg style="left:1081px;top:403px" width="13" height="13" viewBox="0 0 13 13"><rect x="0.6" y="0.6" width="11.8" height="11.8" rx="2.2" fill="#fff" stroke="#6e6e6e" stroke-width="1.2"/></svg>
<div class="t" style="left:578px;top:427.24px;font-size:12.3px;">14306</div>
<div class="t" style="left:656px;top:427.00px;font-size:13px;">пор.</div>
<div class="t" style="left:443.5px;top:427.24px;width:300px;text-align:right;font-size:12.3px;">1,54</div>
<div class="t" style="left:537.5px;top:427.24px;width:300px;text-align:right;font-size:12.3px;">12</div>
<svg style="left:1081px;top:427px" width="13" height="13" viewBox="0 0 13 13"><rect x="0.6" y="0.6" width="11.8" height="11.8" rx="2.2" fill="#fff" stroke="#6e6e6e" stroke-width="1.2"/></svg>
<div class="t" style="left:578px;top:451.74px;font-size:12.3px;">14307</div>
<div class="t" style="left:656px;top:451.50px;font-size:13px;">пор.</div>
<div class="t" style="left:443.5px;top:451.74px;width:300px;text-align:right;font-size:12.3px;">1,9</div>
<div class="t" style="left:500.5px;top:451.74px;width:300px;text-align:right;font-size:12.3px;">2,99</div>
<div class="t" style="left:537.5px;top:451.74px;width:300px;text-align:right;font-size:12.3px;">12</div>
<div class="t" style="left:765.5px;top:451.74px;width:300px;text-align:right;font-size:12.3px;">5</div>
<svg style="left:1081px;top:452px" width="13" height="13" viewBox="0 0 13 13"><rect x="0.6" y="0.6" width="11.8" height="11.8" rx="2.2" fill="#fff" stroke="#6e6e6e" stroke-width="1.2"/></svg>
<div class="t" style="left:844.5px;top:451.74px;width:300px;text-align:right;font-size:12.3px;">100</div>
<div class="t" style="left:578px;top:476.24px;font-size:12.3px;">14308</div>
<div class="t" style="left:656px;top:476.00px;font-size:13px;">пор.</div>
<div class="t" style="left:443.5px;top:476.24px;width:300px;text-align:right;font-size:12.3px;">0,93</div>
<div class="t" style="left:500.5px;top:476.24px;width:300px;text-align:right;font-size:12.3px;">2,99</div>
<div class="t" style="left:537.5px;top:476.24px;width:300px;text-align:right;font-size:12.3px;">1</div>
<div class="t" style="left:765.5px;top:476.24px;width:300px;text-align:right;font-size:12.3px;">22</div>
<svg style="left:1081px;top:476px" width="13" height="13" viewBox="0 0 13 13"><rect x="0.6" y="0.6" width="11.8" height="11.8" rx="2.2" fill="#fff" stroke="#6e6e6e" stroke-width="1.2"/></svg>
<div class="t" style="left:844.5px;top:476.24px;width:300px;text-align:right;font-size:12.3px;">100</div>
<div style="position:absolute;left:1281px;top:144px;width:14px;height:352px;background:#fff"></div>
<svg style="left:1283px;top:152px" width="11" height="7" viewBox="0 0 11 7"><path d="M5.5 0.3L10.6 6.7H0.4Z" fill="#dcdcdc"/></svg>
<svg style="left:1283px;top:481px" width="11" height="7" viewBox="0 0 11 7"><path d="M5.5 6.7L10.6 0.3H0.4Z" fill="#dcdcdc"/></svg>
<div style="position:absolute;left:1284px;top:350px;width:9px;height:69px;background:#d6d6d6;border-radius:5px"></div>
<div style="position:absolute;left:335px;top:496px;width:946px;height:15px;background:#fff"></div>
<svg style="left:342px;top:498px" width="7" height="11" viewBox="0 0 7 11"><path d="M0.3 5.5L6.7 0.4V10.6Z" fill="#dcdcdc"/></svg>
<div style="position:absolute;left:408px;top:499px;width:488px;height:9px;background:#d6d6d6;border-radius:5px"></div>
<svg style="left:1266px;top:498px" width="7" height="11" viewBox="0 0 7 11"><path d="M6.7 5.5L0.3 0.4V10.6Z" fill="#dcdcdc"/></svg>
<div style="position:absolute;left:334px;top:514px;width:31px;height:24px;background:#d3e4e9;border-radius:4px"></div>
<div style="position:absolute;left:435px;top:514px;width:31px;height:24px;background:#d3e4e9;border-radius:4px"></div>
<svg style="left:340px;top:517px" width="19" height="18" viewBox="0 0 19 18"><circle cx="3.2" cy="3.6" r="1.7" fill="none" stroke="#3fb0e8" stroke-width="1.3"/><circle cx="3.2" cy="9.4" r="1.7" fill="none" stroke="#3fb0e8" stroke-width="1.3"/><circle cx="3.2" cy="15" r="1.7" fill="none" stroke="#3fb0e8" stroke-width="1.3"/><path d="M8.6 3.6H18.6M8.6 9.4H18.6M8.6 15H18.6" stroke="#444" stroke-width="1.5"/></svg>
<svg style="left:372px;top:517.2px" width="17" height="17.4" viewBox="0 0 17 17.4"><path d="M6.3 1V16.4M11.6 1V16.4M1 6.1H16M1 11.8H16" stroke="#3fb0e8" stroke-width="1.3"/><rect x="0.7" y="0.7" width="15.6" height="16" rx="0.8" fill="none" stroke="#2a2a2a" stroke-width="1.4"/></svg>
<svg style="left:407px;top:518.3px" width="18" height="17" viewBox="0 0 18 17"><path d="M0.5 1.5H17.5" stroke="#444" stroke-width="1.5"/><path d="M2.5 5.8H15.3" stroke="#3fb0e8" stroke-width="1.5"/><path d="M4.7 10.5H13.1" stroke="#444" stroke-width="1.5"/><path d="M7.3 14.8H11" stroke="#3fb0e8" stroke-width="1.5"/></svg>
<svg style="left:441px;top:516px" width="20" height="20" viewBox="0 0 20 20"><path d="M8.3 1.5h3.4l.5 2.4 1.6.9 2.3-.8 1.7 2.9-1.8 1.6v1.9l1.8 1.6-1.7 2.9-2.3-.8-1.6.9-.5 2.4H8.3l-.5-2.4-1.6-.9-2.3.8-1.7-2.9 1.8-1.6V8.5L2.2 6.9l1.7-2.9 2.3.8 1.6-.9z" fill="none" stroke="#444" stroke-width="1.4" stroke-linejoin="round"/><circle cx="10" cy="10" r="2.4" fill="none" stroke="#3fb0e8" stroke-width="1.4"/></svg>
<svg style="left:477px;top:517px" width="19" height="18" viewBox="0 0 19 18"><text x="0" y="5" font-size="5.5" fill="#3fb0e8" font-family="Liberation Sans">1</text><text x="0" y="11.5" font-size="5.5" fill="#3fb0e8" font-family="Liberation Sans">2</text><text x="0" y="17.5" font-size="5.5" fill="#3fb0e8" font-family="Liberation Sans">3</text><path d="M7.3 2.8H17.4M7.3 9.4H17.4M7.3 16.1H17.4" stroke="#444" stroke-width="1.5"/></svg>
<svg style="left:507px;top:517px" width="19" height="18" viewBox="0 0 19 18"><path d="M1.3 1.5H18.3M1.3 6H18.3M1.3 10.5H7.4M1.3 15H7.7" stroke="#444" stroke-width="1.4"/><path d="M15 9.3V16.7M11.3 13H18.7" stroke="#3fb0e8" stroke-width="1.5"/></svg>
<svg style="left:542px;top:516px" width="20" height="19" viewBox="0 0 20 19"><path d="M8 4H2.5Q1.5 4 1.5 5V17Q1.5 18 2.5 18H14Q15 18 15 17V11" fill="none" stroke="#444" stroke-width="1.5"/><path d="M8 12L18 2M11.5 1.5H18.5V8.5" fill="none" stroke="#3fb0e8" stroke-width="1.5"/></svg>
<svg style="left:577px;top:516px" width="20" height="20" viewBox="0 0 20 20"><path d="M6 5H1.5V14H4" fill="none" stroke="#444" stroke-width="1.5"/><path d="M4 5H12.5M9.5 1.5L13 5L9.5 8.5" fill="none" stroke="#444" stroke-width="1.5"/><path d="M14 5H18.5V14H7M10.5 10.5L7 14L10.5 17.5" fill="none" stroke="#3fb0e8" stroke-width="1.5"/></svg>
<svg style="left:464px;top:548px" width="13" height="13" viewBox="0 0 13 13"><rect x="0" y="0" width="13" height="13" rx="2.2" fill="#737373"/><path d="M2.8 6.7L5.3 9.2L10.4 3.6" fill="none" stroke="#fff" stroke-width="1.8"/></svg>
<div class="t" style="left:480.5px;top:548.50px;font-size:13px;">Активные</div>
<div style="position:absolute;left:546px;top:542px;width:128px;height:26px;background:#fff;border:1px solid #c8c8c8;border-radius:3px;box-sizing:border-box"></div>
<div class="t" style="left:554px;top:548.50px;font-size:13px;">(Все)</div>
<svg style="left:659px;top:552px" width="10" height="7" viewBox="0 0 10 7"><path d="M1 1.2L5 5.2L9 1.2" fill="none" stroke="#111" stroke-width="1.8"/></svg>
<svg style="left:685.5px;top:548px" width="13" height="13" viewBox="0 0 13 13"><rect x="0" y="0" width="13" height="13" rx="2.2" fill="#737373"/><path d="M2.8 6.7L5.3 9.2L10.4 3.6" fill="none" stroke="#fff" stroke-width="1.8"/></svg>
<div class="t" style="left:702.5px;top:548.50px;font-size:13px;">Признак разделения</div>
<svg style="left:836px;top:548px" width="13" height="13" viewBox="0 0 13 13"><rect x="0.6" y="0.6" width="11.8" height="11.8" rx="2.2" fill="#fff" stroke="#6e6e6e" stroke-width="1.2"/></svg>
<div class="t" style="left:852.7px;top:548.67px;font-size:12.5px;">В ассортименте (F4)</div>
<div style="position:absolute;left:979px;top:542px;width:243px;height:26px;background:#fff;border:1px solid #c8c8c8;border-radius:3px;box-sizing:border-box"></div>
<div class="t" style="left:987px;top:548.50px;font-size:13px;">(Все)</div>
<svg style="left:1207px;top:552px" width="10" height="7" viewBox="0 0 10 7"><path d="M1 1.2L5 5.2L9 1.2" fill="none" stroke="#111" stroke-width="1.8"/></svg>
<svg style="left:1233px;top:548.5px" width="13" height="13" viewBox="0 0 13 13"><rect x="0.6" y="0.6" width="11.8" height="11.8" rx="2.2" fill="#fff" stroke="#6e6e6e" stroke-width="1.2"/></svg>
<div class="t" style="left:1249.5px;top:548.50px;font-size:13px;">В акции</div>
<div style="position:absolute;left:906px;top:574px;width:111px;height:24px;background:#fff;border:1px solid #c8c8c8;border-radius:4px;box-sizing:border-box"></div>
<svg style="left:922px;top:580px" width="13" height="13" viewBox="0 0 13 13"><path d="M6.5 0.5V12.5M0.5 6.5H12.5" stroke="#333" stroke-width="1.5"/></svg>
<div class="t" style="left:942.5px;top:579.50px;font-size:13px;">Добавить</div>
<div style="position:absolute;left:1021px;top:574px;width:142px;height:24px;background:#fff;border:1px solid #c8c8c8;border-radius:4px;box-sizing:border-box"></div>
<svg style="left:1036px;top:578px" width="15" height="16" viewBox="0 0 15 16"><path d="M2 12.2L2.8 8.6L9.4 1.8L12.2 4.4L5.7 11.3Z" fill="#b5b5b5" stroke="#505050" stroke-width="1.3" stroke-linejoin="round"/><path d="M1 14.8H13" stroke="#3fb0e8" stroke-width="1.4"/></svg>
<div class="t" style="left:1057.5px;top:579.56px;font-size:12.8px;">Редактировать</div>
<div style="position:absolute;left:1167px;top:574px;width:130px;height:24px;background:#fff;border:1px solid #c8c8c8;border-radius:4px;box-sizing:border-box"></div>
<div class="t" style="left:1183.6px;top:579.56px;font-size:12.8px;">Копировать (F6)</div>
<div style="position:absolute;left:334px;top:612px;width:3px;height:1px;background:#c8c8c8"></div>
<svg style="left:342px;top:606.5px" width="11" height="11" viewBox="0 0 11 11"><circle cx="5.5" cy="5.5" r="4.8" fill="none" stroke="#c4c4c4" stroke-width="1.1"/><path d="M2.8 5.5H8.2" stroke="#b8b8b8" stroke-width="1.1"/></svg>
<div class="t" style="left:358.5px;top:606.50px;font-size:13px;color:#9a9a9a">Кол-во к заказу</div>
<div style="position:absolute;left:455px;top:612px;width:842px;height:1px;background:#cfcfcf"></div>
<div style="position:absolute;left:334px;top:638px;width:3px;height:1px;background:#c8c8c8"></div>
<svg style="left:342px;top:632.5px" width="11" height="11" viewBox="0 0 11 11"><circle cx="5.5" cy="5.5" r="4.8" fill="none" stroke="#c4c4c4" stroke-width="1.1"/><path d="M2.8 5.5H8.2" stroke="#b8b8b8" stroke-width="1.1"/></svg>
<div class="t" style="left:358.5px;top:632.50px;font-size:13px;color:#9a9a9a">Продажи</div>
<div style="position:absolute;left:417px;top:638px;width:145px;height:1px;background:#cfcfcf"></div>
<div style="position:absolute;left:565px;top:626px;width:1px;height:40px;background:#d4d4d4"></div>
<div style="position:absolute;left:570px;top:638px;width:3px;height:1px;background:#c8c8c8"></div>
<svg style="left:578px;top:632.5px" width="11" height="11" viewBox="0 0 11 11"><circle cx="5.5" cy="5.5" r="4.8" fill="none" stroke="#c4c4c4" stroke-width="1.1"/><path d="M2.8 5.5H8.2" stroke="#b8b8b8" stroke-width="1.1"/></svg>
<div class="t" style="left:594.5px;top:632.50px;font-size:13px;color:#9a9a9a">Расчетный запас</div>
<div style="position:absolute;left:697px;top:638px;width:160px;height:1px;background:#cfcfcf"></div>
<div style="position:absolute;left:860px;top:626px;width:1px;height:40px;background:#d4d4d4"></div>
<div style="position:absolute;left:865px;top:638px;width:3px;height:1px;background:#c8c8c8"></div>
<svg style="left:873px;top:632.5px" width="11" height="11" viewBox="0 0 11 11"><circle cx="5.5" cy="5.5" r="4.8" fill="none" stroke="#c4c4c4" stroke-width="1.1"/><path d="M2.8 5.5H8.2" stroke="#b8b8b8" stroke-width="1.1"/></svg>
<div class="t" style="left:889.5px;top:632.50px;font-size:13px;color:#9a9a9a">Буферы</div>
<div style="position:absolute;left:941px;top:638px;width:151px;height:1px;background:#cfcfcf"></div>
<div style="position:absolute;left:482px;top:655px;width:80px;height:20px;background:#fff;border:1px solid #cfcfcf;border-radius:3px;box-sizing:border-box"></div>
<div style="position:absolute;left:777px;top:655px;width:79px;height:20px;background:#fff;border:1px solid #cfcfcf;border-radius:3px;box-sizing:border-box"></div>
<div style="position:absolute;left:1012px;top:655px;width:80px;height:20px;background:#fff;border:1px solid #cfcfcf;border-radius:3px;box-sizing:border-box"></div>
<div style="position:absolute;left:67px;top:34px;width:73px;height:28px;border:3px solid #ff0000;border-radius:2px;box-sizing:border-box"></div>
<div style="position:absolute;left:335px;top:59px;width:71px;height:29px;border:3px solid #ff0000;border-radius:2px;box-sizing:border-box"></div>
<div style="position:absolute;left:1228px;top:545px;width:75px;height:22px;border:3px solid #ff0000;border-radius:2px;box-sizing:border-box"></div>
<div class="t" style="left:40.6px;top:315.32px;font-size:13.5px;color:#ff0000;letter-spacing:0.54px">Подсветка товаров на которые</div>
<div class="t" style="left:44.8px;top:334.42px;font-size:13.5px;color:#ff0000;letter-spacing:0.81px">есть действующий акционный прайс</div>
<div class="t" style="left:1100.6px;top:341.22px;font-size:13.5px;color:#ff0000;letter-spacing:0.53px">Отбор товаров на которые</div>
<div class="t" style="left:1104.4px;top:359.92px;font-size:13.5px;color:#ff0000;letter-spacing:0.69px">есть действующий</div>
<div class="t" style="left:1100.6px;top:379.12px;font-size:13.5px;color:#ff0000;letter-spacing:0.95px">акционный прайс</div>
<svg style="left:0;top:0;width:1320px;height:659px;pointer-events:none" width="1320" height="659" viewBox="0 0 1320 659"><path d="M203 305.5L330 252" stroke="#ff0000" stroke-width="3.6" stroke-linecap="round"/><path d="M341 246.8L326.5 248.5L330.5 257Z" fill="#ff0000"/><path d="M1199 405L1236.5 533" stroke="#ff0000" stroke-width="3.4" stroke-linecap="round"/><path d="M1241.5 544L1233 531.5L1242 529Z" fill="#ff0000"/></svg>
</body></html>
